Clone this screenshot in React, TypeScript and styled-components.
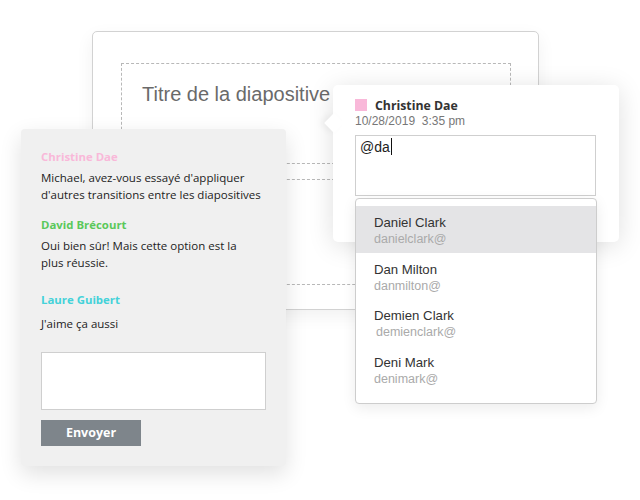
import styled, { createGlobalStyle } from 'styled-components';

const GlobalStyle = createGlobalStyle`
  html, body {
    margin: 0;
    padding: 0;
    background: #fff;
  }
  body {
    font-family: "Open Sans", "Liberation Sans", sans-serif;
  }
`;

type Comment = {
  author: string;
  color: string;
  text: string[];
  top: number;
  nameGap: number;
};

const comments: Comment[] = [
  {
    author: 'Christine Dae',
    color: '#f9b8d9',
    text: ["Michael, avez-vous essayé d'appliquer", "d'autres transitions entre les diapositives"],
    top: 0,
    nameGap: 4,
  },
  {
    author: 'David Brécourt',
    color: '#5ac85a',
    text: ['Oui bien sûr! Mais cette option est la', 'plus réussie.'],
    top: 13,
    nameGap: 4,
  },
  {
    author: 'Laure Guibert',
    color: '#44d2d9',
    text: ["J'aime ça aussi"],
    top: 20,
    nameGap: 7,
  },
];

type Mention = {
  name: string;
  handle: string;
  shift?: number;
};

const mentions: Mention[] = [
  { name: 'Daniel Clark', handle: 'danielclark@' },
  { name: 'Dan Milton', handle: 'danmilton@' },
  { name: 'Demien Clark', handle: 'demienclark@', shift: 2 },
  { name: 'Deni Mark', handle: 'denimark@' },
];

const App = () => {
  return (
    <>
      <GlobalStyle />
      <Stage>
        <Slide>
          <TitleBox>
            <SlideTitle>Titre de la diapositive</SlideTitle>
          </TitleBox>
          <ContentBox />
        </Slide>

        <ThreadPanel>
          {comments.map((c) => (
            <Entry key={c.author} $top={c.top}>
              <Author $color={c.color} $gap={c.nameGap}>
                {c.author}
              </Author>
              <Body>
                {c.text.map((line) => (
                  <div key={line}>{line}</div>
                ))}
              </Body>
            </Entry>
          ))}
          <ReplyBox />
          <SendButton>Envoyer</SendButton>
        </ThreadPanel>

        <Popup>
          <PopupHeader>
            <ColorChip />
            <PopupName>Christine Dae</PopupName>
          </PopupHeader>
          <DateLine>10/28/2019&nbsp;&nbsp;3:35 pm</DateLine>
          <MentionInput>
            @da
            <Caret />
          </MentionInput>
        </Popup>

        <Dropdown>
          {mentions.map((m, i) => (
            <Option key={m.handle} $active={i === 0}>
              <OptionName>{m.name}</OptionName>
              <OptionHandle $shift={m.shift ?? 0}>{m.handle}</OptionHandle>
            </Option>
          ))}
        </Dropdown>
      </Stage>
    </>
  );
};

const Stage = styled.div`
  position: relative;
  width: 640px;
  height: 500px;
  overflow: hidden;
  background: #fff;
`;

const Slide = styled.div`
  position: absolute;
  left: 92px;
  top: 31px;
  width: 447px;
  height: 279px;
  box-sizing: border-box;
  border: 1px solid #d2d2d2;
  border-radius: 5px;
  background: #fff;
  box-shadow: 0 6px 18px rgba(0, 0, 0, 0.06);
  padding: 31px 27px 0 28px;
  display: flex;
  flex-direction: column;
  gap: 15px;
`;

const TitleBox = styled.div`
  height: 101px;
  box-sizing: border-box;
  border: 1px dashed #b8b8b8;
  padding: 17px 20px 0;
`;

const SlideTitle = styled.div`
  font-family: "Liberation Sans", Arial, sans-serif;
  font-size: 20px;
  line-height: 26px;
  color: #6a6a6a;
`;

const ContentBox = styled.div`
  height: 106px;
  box-sizing: border-box;
  border: 1px dashed #b8b8b8;
`;

const ThreadPanel = styled.div`
  position: absolute;
  left: 21px;
  top: 129px;
  width: 265px;
  height: 337px;
  box-sizing: border-box;
  background: #f0f0f0;
  border-radius: 4px;
  box-shadow: 0 8px 22px rgba(0, 0, 0, 0.12);
  padding: 19px 20px 0;
  display: flex;
  flex-direction: column;
`;

const Entry = styled.div<{ $top: number }>`
  margin-top: ${(p) => p.$top}px;
`;

const Author = styled.div<{ $color: string; $gap: number }>`
  font-size: 11.4px;
  line-height: 18px;
  font-weight: 700;
  color: ${(p) => p.$color};
  margin-bottom: ${(p) => p.$gap}px;
  white-space: nowrap;
`;

const Body = styled.div`
  font-size: 11.5px;
  line-height: 16.5px;
  color: #222;
  white-space: nowrap;
`;

const ReplyBox = styled.div`
  margin-top: 19px;
  width: 225px;
  height: 58px;
  box-sizing: border-box;
  background: #fff;
  border: 1px solid #cfcfcf;
`;

const SendButton = styled.button`
  margin-top: 10px;
  width: 100px;
  height: 26px;
  border: none;
  padding: 0;
  background: #7e858b;
  color: #fff;
  font-family: "Open Sans", sans-serif;
  font-size: 12.5px;
  font-weight: 700;
  text-align: center;
`;

const Popup = styled.div`
  position: absolute;
  left: 333px;
  top: 85px;
  width: 286px;
  height: 157px;
  box-sizing: border-box;
  background: #fff;
  border-radius: 5px;
  box-shadow: 0 4px 26px rgba(0, 0, 0, 0.13);
  padding: 12px 22px 0;

  &::before {
    content: '';
    position: absolute;
    left: -6px;
    top: 31px;
    width: 14px;
    height: 14px;
    background: #fff;
    transform: rotate(45deg);
    box-shadow: -3px 3px 6px rgba(0, 0, 0, 0.05);
  }
`;

const PopupHeader = styled.div`
  position: relative;
  display: flex;
  align-items: center;
  gap: 8px;
  height: 16px;
`;

const ColorChip = styled.span`
  width: 12px;
  height: 12px;
  background: #f9b8d9;
`;

const PopupName = styled.span`
  font-size: 12.3px;
  font-weight: 700;
  color: #333;
`;

const DateLine = styled.div`
  margin-top: 1px;
  font-family: "Liberation Sans", Arial, sans-serif;
  font-size: 12px;
  line-height: 15px;
  color: #777;
`;

const MentionInput = styled.div`
  margin-top: 6px;
  width: 241px;
  height: 61px;
  box-sizing: border-box;
  border: 1px solid #cfcfcf;
  padding: 2px 4px;
  font-family: "Liberation Sans", Arial, sans-serif;
  font-size: 14px;
  line-height: 18px;
  color: #222;
  display: flex;
  align-items: flex-start;
`;

const Caret = styled.span`
  width: 1px;
  height: 17px;
  margin-left: 1px;
  background: #111;
`;

const Dropdown = styled.div`
  position: absolute;
  left: 355px;
  top: 198px;
  width: 242px;
  height: 206px;
  box-sizing: border-box;
  background: #fff;
  border: 1px solid #cdcdcd;
  border-radius: 4px;
  box-shadow: 0 4px 14px rgba(0, 0, 0, 0.08);
  padding-top: 7px;
  display: flex;
  flex-direction: column;
`;

const Option = styled.div<{ $active: boolean }>`
  height: 46.5px;
  box-sizing: border-box;
  padding: 8px 18px 0;
  background: ${(p) => (p.$active ? '#e4e4e6' : 'transparent')};
  font-family: "Liberation Sans", Arial, sans-serif;
`;

const OptionName = styled.div`
  font-size: 13.2px;
  line-height: 17px;
  color: #333;
`;

const OptionHandle = styled.div<{ $shift: number }>`
  font-size: 12.5px;
  line-height: 16.5px;
  color: #aaa;
  margin-left: ${(p) => p.$shift}px;
`;

export default App;
